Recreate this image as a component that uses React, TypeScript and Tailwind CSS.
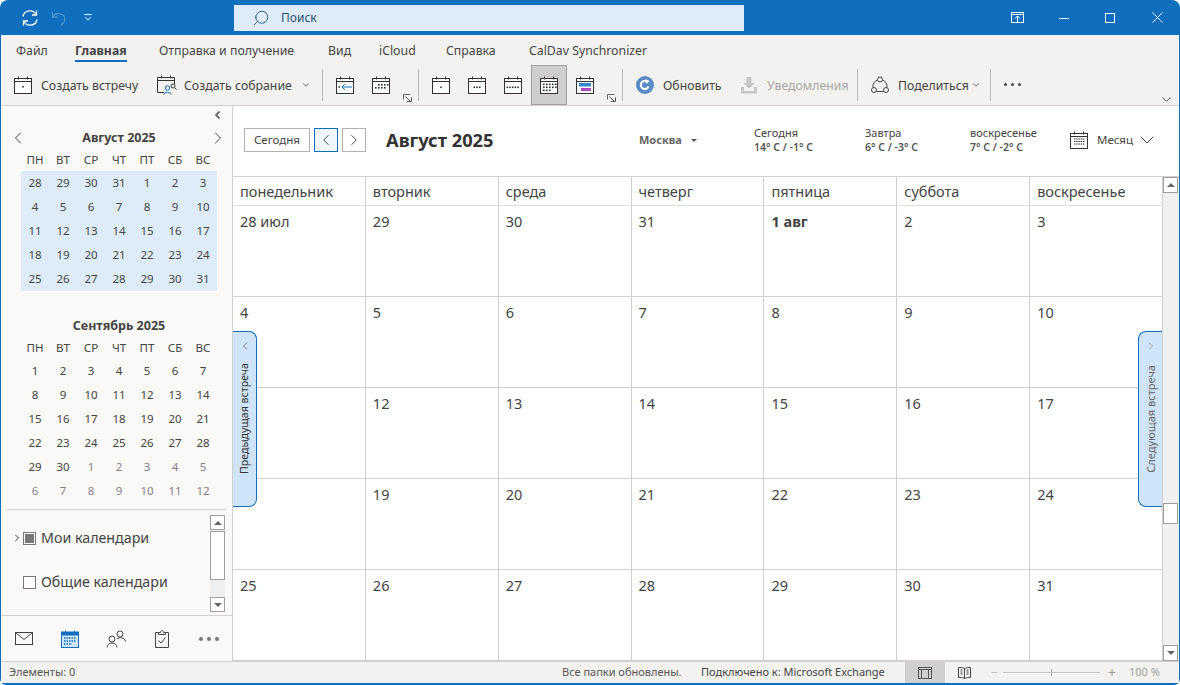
import { ChevronDown, ChevronLeft, ChevronRight, Minus, Search } from "lucide-react";

const tabs = [
  { label: "Файл", w: "w-[59px]" },
  { label: "Главная", w: "w-[84px]", active: true },
  { label: "Отправка и получение", w: "w-[169px]" },
  { label: "Вид", w: "w-[51px]" },
  { label: "iCloud", w: "w-[67px]" },
  { label: "Справка", w: "w-[83px]" },
  { label: "CalDav Synchronizer", w: "" },
];

const weekdays = ["понедельник", "вторник", "среда", "четверг", "пятница", "суббота", "воскресенье"];
const shortDays = ["ПН", "ВТ", "СР", "ЧТ", "ПТ", "СБ", "ВС"];

const monthCells = [
  "28 июл", "29", "30", "31", "1 авг", "2", "3",
  "4", "5", "6", "7", "8", "9", "10",
  "11", "12", "13", "14", "15", "16", "17",
  "18", "19", "20", "21", "22", "23", "24",
  "25", "26", "27", "28", "29", "30", "31",
];

const augDays = [28, 29, 30, 31, ...Array.from({ length: 31 }, (_, i) => i + 1)];
const sepDays = [
  ...Array.from({ length: 30 }, (_, i) => i + 1),
  ...Array.from({ length: 12 }, (_, i) => i + 1),
];

// dots: small squares drawn on the calendar glyph
function CalIcon({ dots = [], children }: { dots?: [number, number][]; children?: React.ReactNode }) {
  return (
    <svg width="18" height="18" viewBox="0 0 18 18" fill="none" className="shrink-0">
      <rect x="0.5" y="2.5" width="17" height="15" fill="#fff" stroke="#333" />
      <path d="M0.5 5.5H17.5M4.5 0.5V3.5M13.5 0.5V3.5" stroke="#333" />
      {dots.map(([x, y]) => (
        <rect key={`${x}-${y}`} x={x} y={y} width="1.6" height="1.6" fill="#333" />
      ))}
      {children}
    </svg>
  );
}

const fullDots: [number, number][] = [
  [3, 7.5], [6, 7.5], [9, 7.5], [12, 7.5], [15, 7.5],
  [3, 10.5], [6, 10.5], [9, 10.5], [12, 10.5], [15, 10.5],
  [3, 13.5], [6, 13.5], [9, 13.5],
];

function Launcher() {
  return (
    <svg width="9" height="8" viewBox="0 0 9 8" fill="none" className="shrink-0 self-end mb-[3px]">
      <path d="M0.5 5.5V0.5H7.5" stroke="#666" />
      <path d="M2.5 2.5L7.5 7.5M4 7.5H8.5V3.5" stroke="#555" />
    </svg>
  );
}

function Sep({ className }: { className?: string }) {
  return <div className={`w-px h-[32px] bg-[#bdbbb9] shrink-0 ${className ?? ""}`} />;
}

function Ribbon() {
  return (
    <div className="bg-[#f3f2f1] h-[71px] border-b border-[#d2d0ce] shrink-0 ml-px mr-px">
      <div className="h-[29px] flex pl-[15px] text-[12.3px] text-[#444]">
        {tabs.map((t) => (
          <div key={t.label} className={`${t.w} h-full flex items-start pt-[7px]`}>
            <span className={t.active ? "relative font-bold text-[#444]" : ""}>
              {t.label}
              {t.active && <span className="absolute left-0 right-0 top-[18px] h-[2px] bg-[#106ebe]" />}
            </span>
          </div>
        ))}
      </div>
      <div className="h-[41px] flex items-center pl-[13px] text-[12.3px] text-[#444] relative">
        <CalIcon dots={[[8.2, 10]]} />
        <span className="ml-[9px] w-[116px] pt-[3px]">Создать встречу</span>
        <svg width="20" height="20" viewBox="0 0 20 20" fill="none" className="shrink-0">
          <path d="M7 17.5H0.5V2.5H17.5V9M0.5 5.5H17.5M4.5 0.5V3.5M13.5 0.5V3.5" stroke="#333" />
          <circle cx="10.5" cy="13" r="2.2" stroke="#106ebe" />
          <path d="M6.5 19.5C6.8 16.8 14 16.8 14.5 19.5" stroke="#106ebe" />
          <circle cx="16" cy="11" r="2" stroke="#333" />
          <path d="M17.5 12.5L19.5 14.5" stroke="#333" />
        </svg>
        <span className="ml-[7px] w-[117px] pt-[3px]">Создать собрание</span>
        <ChevronDown size={10} strokeWidth={2} className="text-[#555] shrink-0" />
        <Sep className="ml-[11px]" />
        <div className="ml-[13px]">
          <CalIcon>
            <path d="M16 11H6M9 8L6 11L9 14" stroke="#106ebe" />
            <rect x="2.5" y="10" width="1.6" height="1.6" fill="#333" />
          </CalIcon>
        </div>
        <div className="ml-[18px]">
          <CalIcon dots={[[6, 8], [9, 8], [12, 8], [15, 8], [3, 11], [6, 11], [9, 11], [12, 11]]} />
        </div>
        <div className="ml-[13px] h-full flex"><Launcher /></div>
        <Sep className="ml-[6px]" />
        <div className="ml-[13px]"><CalIcon dots={[[8.2, 10.5]]} /></div>
        <div className="ml-[18px]"><CalIcon dots={[[5.5, 10.5], [8.2, 10.5], [10.9, 10.5]]} /></div>
        <div className="ml-[18px]">
          <CalIcon dots={[[2.5, 10.5], [5.2, 10.5], [7.9, 10.5], [10.6, 10.5], [13.3, 10.5]]} />
        </div>
        <div className="ml-[9px] w-[36px] h-[40px] bg-[#cfcecc] border border-[#a19f9d] flex items-center justify-center shrink-0">
          <CalIcon dots={fullDots} />
        </div>
        <div className="ml-[9px]">
          <CalIcon>
            <rect x="3" y="7" width="12" height="3.5" fill="#106ebe" opacity="0.85" />
            <rect x="5" y="12" width="10" height="3" fill="#b146c2" />
          </CalIcon>
        </div>
        <div className="ml-[13px] h-full flex"><Launcher /></div>
        <Sep className="ml-[6px]" />
        <svg width="18" height="18" viewBox="0 0 18 18" className="ml-[13px] shrink-0">
          <circle cx="9" cy="9" r="9" fill="#5b8bc6" />
          <path d="M12.5 10.5A4 4 0 1 1 11 5.6" fill="none" stroke="#fff" strokeWidth="2" />
          <path d="M9.5 3L13.5 5L10.5 8Z" fill="#fff" />
        </svg>
        <span className="ml-[9px] w-[77px] pt-[3px]">Обновить</span>
        <svg width="18" height="18" viewBox="0 0 18 18" className="shrink-0">
          <path d="M6.5 1H11.5V7H15L9 12.5L3 7H6.5Z" fill="#c8c6c4" />
          <path d="M1 11H4V15H14V11H17V17.5H1Z" fill="#c8c6c4" />
        </svg>
        <span className="ml-[9px] w-[90px] pt-[3px] text-[#a8a6a4]">Уведомления</span>
        <Sep />
        <svg width="18" height="18" viewBox="0 0 18 18" fill="none" stroke="#444" className="ml-[13px] shrink-0">
          <circle cx="9" cy="3.5" r="2.5" />
          <circle cx="3" cy="14" r="2.5" />
          <circle cx="15" cy="14" r="2.5" />
          <path d="M6.7 3.8A7 7 0 0 0 2 11.5M11.3 3.8A7 7 0 0 1 16 11.5M5.5 15.5H12.5" />
        </svg>
        <span className="ml-[9px] w-[73px] pt-[3px]">Поделиться</span>
        <ChevronDown size={10} strokeWidth={2} className="text-[#555] shrink-0" />
        <Sep className="ml-[9px]" />
        <div className="ml-[13px] flex gap-[4px]">
          <span className="w-[3px] h-[3px] rounded-full bg-[#444]" />
          <span className="w-[3px] h-[3px] rounded-full bg-[#444]" />
          <span className="w-[3px] h-[3px] rounded-full bg-[#444]" />
        </div>
        <ChevronDown size={15} strokeWidth={1.5} className="absolute right-[5px] bottom-[-2px] text-[#444]" />
      </div>
    </div>
  );
}

function MiniMonth({ title, days, muteFrom, shade }: { title: string; days: number[]; muteFrom?: number; shade?: boolean }) {
  return (
    <div className="w-[196px]">
      <div className="h-[22px] flex items-center justify-center text-[12.5px] font-bold text-[#444]">{title}</div>
      <div className="grid grid-cols-7 text-[11.5px] text-[#444] h-[22px] items-center text-center">
        {shortDays.map((d) => <span key={d}>{d}</span>)}
      </div>
      <div className={`grid grid-cols-7 text-[11.5px] text-center auto-rows-[24px] ${shade ? "bg-[#deecf9]" : ""}`}>
        {days.map((d, i) => (
          <span key={i} className={`flex items-center justify-center ${muteFrom !== undefined && i >= muteFrom ? "text-[#8a7f8f]" : "text-[#444]"}`}>
            {d}
          </span>
        ))}
      </div>
    </div>
  );
}

function Sidebar() {
  return (
    <div className="w-[232px] shrink-0 bg-[#faf9f8] border-r border-[#d2d0ce] flex flex-col text-[#444]">
      <div className="h-[21px] relative shrink-0">
        <svg width="6" height="8" viewBox="0 0 6 8" className="absolute left-[214px] top-[5px]">
          <path d="M4.5 0.5L1 4L4.5 7.5" fill="none" stroke="#666" strokeWidth="1.8" />
        </svg>
      </div>
      <div className="relative pl-[20px] shrink-0">
        <ChevronLeft size={20} strokeWidth={1.2} className="absolute left-[7px] top-[1px] text-[#444]" />
        <ChevronRight size={20} strokeWidth={1.2} className="absolute left-[207px] top-[1px] text-[#444]" />
        <MiniMonth title="Август 2025" days={augDays} shade />
      </div>
      <div className="pl-[20px] mt-[24px] shrink-0">
        <MiniMonth title="Сентябрь 2025" days={sepDays} muteFrom={30} />
      </div>
      <div className="mx-[6px] mt-[6px] border-t border-[#d2d0ce] flex-1 flex min-h-0">
        <div className="flex-1 text-[14.25px] pt-[16px]">
          <div className="flex items-center h-[24px]">
            <ChevronRight size={12} strokeWidth={2} className="ml-[4px] text-[#444]" />
            <span className="w-[13px] h-[13px] border border-[#777] bg-white flex items-center justify-center">
              <span className="w-[9px] h-[9px] bg-[#777]" />
            </span>
            <span className="ml-[5px]">Мои календари</span>
          </div>
          <div className="flex items-center h-[24px] mt-[20px]">
            <span className="w-[13px] h-[13px] border border-[#777] bg-white ml-[16px]" />
            <span className="ml-[5px]">Общие календари</span>
          </div>
        </div>
        <div className="w-[15px] mr-[1px] mt-[5px] mb-[3px] bg-[#efefef] flex flex-col shrink-0">
          <div className="h-[15px] bg-white border border-[#a19f9d] flex items-center justify-center">
            <span className="w-0 h-0 border-x-[4px] border-x-transparent border-b-[4px] border-b-[#666]" />
          </div>
          <div className="h-[49px] mt-px bg-white border border-[#a19f9d]" />
          <div className="flex-1" />
          <div className="h-[15px] bg-white border border-[#a19f9d] flex items-center justify-center">
            <span className="w-0 h-0 border-x-[4px] border-x-transparent border-t-[4px] border-t-[#666]" />
          </div>
        </div>
      </div>
      <div className="h-[46px] border-t border-[#d2d0ce] flex items-center pl-[14px] shrink-0">
        <svg width="18" height="13" viewBox="0 0 18 13" fill="none" stroke="#444" className="shrink-0">
          <rect x="0.5" y="0.5" width="17" height="12" />
          <path d="M0.5 0.5L9 7.5L17.5 0.5" />
        </svg>
        <svg width="18" height="18" viewBox="0 0 18 18" className="ml-[28px] shrink-0">
          <rect x="0.5" y="2" width="17" height="15.5" fill="#cfe4f7" stroke="#106ebe" />
          <rect x="0.5" y="2" width="17" height="3.5" fill="#106ebe" />
          <path d="M4.5 0.5V3M13.5 0.5V3" stroke="#106ebe" />
          <path d="M3 8H15M3 11H15M3 14H11" stroke="#106ebe" strokeWidth="1.5" strokeDasharray="1.5 1" />
        </svg>
        <svg width="20" height="18" viewBox="0 0 20 18" fill="none" stroke="#444" className="ml-[27px] shrink-0">
          <circle cx="6" cy="9" r="3" />
          <path d="M1 17.5C1 11.5 11 11.5 11 17.5" />
          <circle cx="14" cy="4" r="3" />
          <path d="M11 9C13 7 19 7 19.5 11.5" />
        </svg>
        <svg width="14" height="18" viewBox="0 0 14 18" fill="none" stroke="#444" className="ml-[29px] shrink-0">
          <path d="M3.5 2.5H0.5V17.5H13.5V2.5H10.5" />
          <path d="M3.5 4.5V2.5H5.5C5.5 0 8.5 0 8.5 2.5H10.5V4.5Z" />
          <path d="M3.5 10.5L6 13L10.5 7.5" />
        </svg>
        <div className="ml-[30px] flex gap-[4px]">
          <span className="w-[4px] h-[4px] rounded-full bg-[#777]" />
          <span className="w-[4px] h-[4px] rounded-full bg-[#777]" />
          <span className="w-[4px] h-[4px] rounded-full bg-[#777]" />
        </div>
      </div>
    </div>
  );
}

function Weather({ day, temp, w }: { day: string; temp: string; w: string }) {
  return (
    <div className={`${w} shrink-0 leading-[15px] text-[11px] text-[#444]`}>
      <div>{day}</div>
      <div className="font-semibold text-[10.5px] text-[#555]">{temp}</div>
    </div>
  );
}

function CalendarHeader() {
  return (
    <div className="h-[70px] shrink-0 flex items-center pl-[11px] pb-[2px] text-[#444]">
      <button className="w-[66px] h-[24px] border border-[#b3b0ad] text-[11.5px] bg-white">Сегодня</button>
      <button className="ml-[4px] w-[24px] h-[24px] border border-[#106ebe] bg-[#eff6fc] flex items-center justify-center">
        <ChevronLeft size={18} strokeWidth={1.3} />
      </button>
      <button className="ml-[4px] w-[24px] h-[24px] border border-[#b3b0ad] flex items-center justify-center">
        <ChevronRight size={18} strokeWidth={1.3} />
      </button>
      <span className="ml-[20px] w-[253px] text-[18.3px] font-bold text-[#333]">Август 2025</span>
      <span className="w-[52px] text-[11px] font-bold text-[#666]">Москва</span>
      <span className="w-0 h-0 border-x-[3px] border-x-transparent border-t-[3px] border-t-[#555]" />
      <div className="w-[57px] shrink-0" />
      <Weather day="Сегодня" temp="14° C / -1° C" w="w-[111px]" />
      <Weather day="Завтра" temp="6° C / -3° C" w="w-[105px]" />
      <Weather day="воскресенье" temp="7° C / -2° C" w="w-[100px]" />
      <svg width="18" height="18" viewBox="0 0 18 18" fill="none" stroke="#333" className="shrink-0">
        <rect x="0.5" y="2.5" width="17" height="15" />
        <path d="M0.5 5.5H17.5M4.5 0.5V3.5M13.5 0.5V3.5" />
        <path d="M4 8H15M4 10.5H15M4 13H15" strokeDasharray="1.5 0.7" />
      </svg>
      <span className="ml-[9px] text-[11.5px]">Месяц</span>
      <ChevronDown size={24} strokeWidth={1} className="ml-[2px]" />
    </div>
  );
}

function MonthGrid() {
  return (
    <div className="flex-1 flex flex-col border-t border-[#d2d0ce] min-h-0">
      <div className="grid grid-cols-7 h-[29px] border-b border-[#e1dfdd] shrink-0 text-[14.5px] text-[#444]">
        {weekdays.map((d) => (
          <div key={d} className="border-r border-[#d2d0ce] pl-[7px] pt-[1px] flex items-center">{d}</div>
        ))}
      </div>
      <div className="grid grid-cols-7 grid-rows-5 flex-1 text-[14.5px] text-[#444]">
        {monthCells.map((c, i) => (
          <div key={i} className={`border-r border-b border-[#d2d0ce] pl-[7px] pt-[5px] ${c === "1 авг" ? "font-bold" : ""}`}>
            {c}
          </div>
        ))}
      </div>
    </div>
  );
}

function SideTab({ label, side }: { label: string; side: "left" | "right" }) {
  const left = side === "left";
  return (
    <div
      className={
        left
          ? "absolute left-0 top-[225px] w-[24px] h-[176px] bg-[#cfe4f7] border border-l-0 border-[#106ebe] rounded-r-[8px] flex flex-col items-center pt-[8px]"
          : "absolute right-[17px] top-[225px] w-[24px] h-[176px] bg-[#cfe4f7] border border-r-0 border-[#106ebe] rounded-l-[8px] flex flex-col items-center pt-[8px]"
      }
    >
      {left ? (
        <ChevronLeft size={12} strokeWidth={1.5} className="text-[#555]" />
      ) : (
        <ChevronRight size={12} strokeWidth={1.5} className="text-[#999]" />
      )}
      <span
        className={
          left
            ? "mt-[11px] [writing-mode:vertical-rl] rotate-180 text-[10.6px] leading-none whitespace-nowrap text-[#333]"
            : "mt-[13px] [writing-mode:vertical-rl] rotate-180 text-[11px] leading-none whitespace-nowrap text-[#666]"
        }
      >
        {label}
      </span>
    </div>
  );
}

function MainScroll() {
  return (
    <div className="w-[16px] shrink-0 bg-[#f0f0f0] flex flex-col pr-px border-t border-[#d2d0ce]">
      <div className="h-[16px] bg-white border border-[#a19f9d] flex items-center justify-center">
        <span className="w-0 h-0 border-x-[4px] border-x-transparent border-b-[4px] border-b-[#666]" />
      </div>
      <div className="h-[21px] mt-[310px] bg-white border border-[#a19f9d]" />
      <div className="flex-1" />
      <div className="h-[16px] bg-white border border-[#a19f9d] flex items-center justify-center">
        <span className="w-0 h-0 border-x-[4px] border-x-transparent border-t-[4px] border-t-[#666]" />
      </div>
    </div>
  );
}

function StatusBar() {
  return (
    <div className="h-[22px] shrink-0 bg-[#f3f2f1] border-t border-[#d2d0ce] flex items-center pl-[8px] text-[11px] text-[#555] ml-px mr-px">
      <span className="w-[553px] shrink-0">Элементы: 0</span>
      <span className="w-[139px] shrink-0">Все папки обновлены.</span>
      <span className="w-[204px] shrink-0 text-[#444]">Подключено к: Microsoft Exchange</span>
      <div className="w-[40px] h-full bg-[#d2d0ce] flex items-center justify-center shrink-0">
        <svg width="14" height="12" viewBox="0 0 14 12" fill="none" stroke="#555">
          <rect x="0.5" y="0.5" width="13" height="11" />
          <path d="M0.5 2.5H13.5M3.5 2.5V11.5M10.5 2.5V11.5" />
        </svg>
      </div>
      <svg width="13" height="12" viewBox="0 0 13 12" fill="none" stroke="#444" className="ml-[13px] shrink-0">
        <path d="M6.5 1.5C5 0.5 2.5 0.5 0.5 0.5V10.5C2.5 10.5 5 10.5 6.5 11.5C8 10.5 10.5 10.5 12.5 10.5V0.5C10.5 0.5 8 0.5 6.5 1.5ZM6.5 1.5V11.5" />
        <path d="M2.5 3H4.5M2.5 5H4.5M2.5 7H4.5M8.5 3H10.5M8.5 5H10.5M8.5 7H10.5" />
      </svg>
      <div className="ml-[19px] flex items-center text-[#a19f9d]">
        <Minus size={9} strokeWidth={1.5} />
        <div className="ml-[4px] w-[97px] h-px bg-[#c8c6c4] relative">
          <span className="absolute left-[48px] top-[-3px] w-px h-[7px] bg-[#b3b0ad]" />
        </div>
        <span className="ml-[8px] text-[14px] leading-none">+</span>
        <span className="ml-[13px] text-[11px]">100 %</span>
      </div>
    </div>
  );
}

export default function App() {
  return (
    <div className="w-[1180px] h-[685px] bg-white overflow-hidden">
      <div className="w-full h-full bg-[#106ebe] rounded-t-[8px] rounded-b-[6px] flex flex-col font-['Noto_Sans','Open_Sans',sans-serif] pb-[2px] relative">
        {/* title bar */}
        <div className="h-[35px] shrink-0 flex items-center text-white relative">
          <svg width="18" height="18" viewBox="0 0 18 18" fill="none" stroke="#fff" strokeWidth="1.3" className="ml-[21px] shrink-0">
            <path d="M2 7.5A7 7 0 0 1 15 5.5M16 10.5A7 7 0 0 1 3 12.5" />
            <path d="M15.5 1.5V6H11M2.5 16.5V12H7" />
          </svg>
          <svg width="16" height="16" viewBox="0 0 16 16" fill="none" stroke="#4d97d6" strokeWidth="1.3" className="ml-[12px] shrink-0">
            <path d="M1.5 2V7H6.5M1.5 7C4 3 10 2.5 13 6C15 9 13.5 13 10 15" />
          </svg>
          <svg width="8" height="7" viewBox="0 0 8 7" fill="none" stroke="#fff" className="ml-[17px] shrink-0">
            <path d="M0.5 0.5H7.5M1 3L4 6L7 3" />
          </svg>
          <div className="absolute left-[234px] top-[5px] w-[510px] h-[26px] bg-[#deecf9] flex items-center pl-[18px] text-[#2b4d70] text-[12px]">
            <Search size={18} strokeWidth={1.2} className="-scale-x-100 text-[#23527c]" />
            <span className="ml-[11px]">Поиск</span>
          </div>
          <div className="ml-auto flex items-center pr-[16px]">
            <svg width="13" height="11" viewBox="0 0 13 11" fill="none" stroke="#fff" className="mr-[35px]">
              <rect x="0.5" y="0.5" width="12" height="10" />
              <path d="M0.5 2.5H12.5M6.5 10V4.5M4 6.5L6.5 4L9 6.5" />
            </svg>
            <svg width="10" height="10" viewBox="0 0 10 10" fill="none" stroke="#fff" className="mr-[36px]">
              <path d="M0 5.5H10" />
            </svg>
            <svg width="10" height="10" viewBox="0 0 10 10" fill="none" stroke="#fff" className="mr-[36px]">
              <rect x="0.5" y="0.5" width="9" height="9" />
            </svg>
            <svg width="13" height="11" viewBox="0 0 13 11" fill="none" stroke="#fff">
              <path d="M1.5 0.5L11.5 10.5M11.5 0.5L1.5 10.5" />
            </svg>
          </div>
        </div>
        <Ribbon />
        <div className="flex-1 flex min-h-0 ml-px mr-px bg-white">
          <Sidebar />
          <div className="flex-1 flex flex-col relative min-w-0">
            <CalendarHeader />
            <div className="flex-1 flex min-h-0">
              <MonthGrid />
              <MainScroll />
            </div>
            <SideTab label="Предыдущая встреча" side="left" />
            <SideTab label="Следующая встреча" side="right" />
          </div>
        </div>
        <StatusBar />
      </div>
    </div>
  );
}
